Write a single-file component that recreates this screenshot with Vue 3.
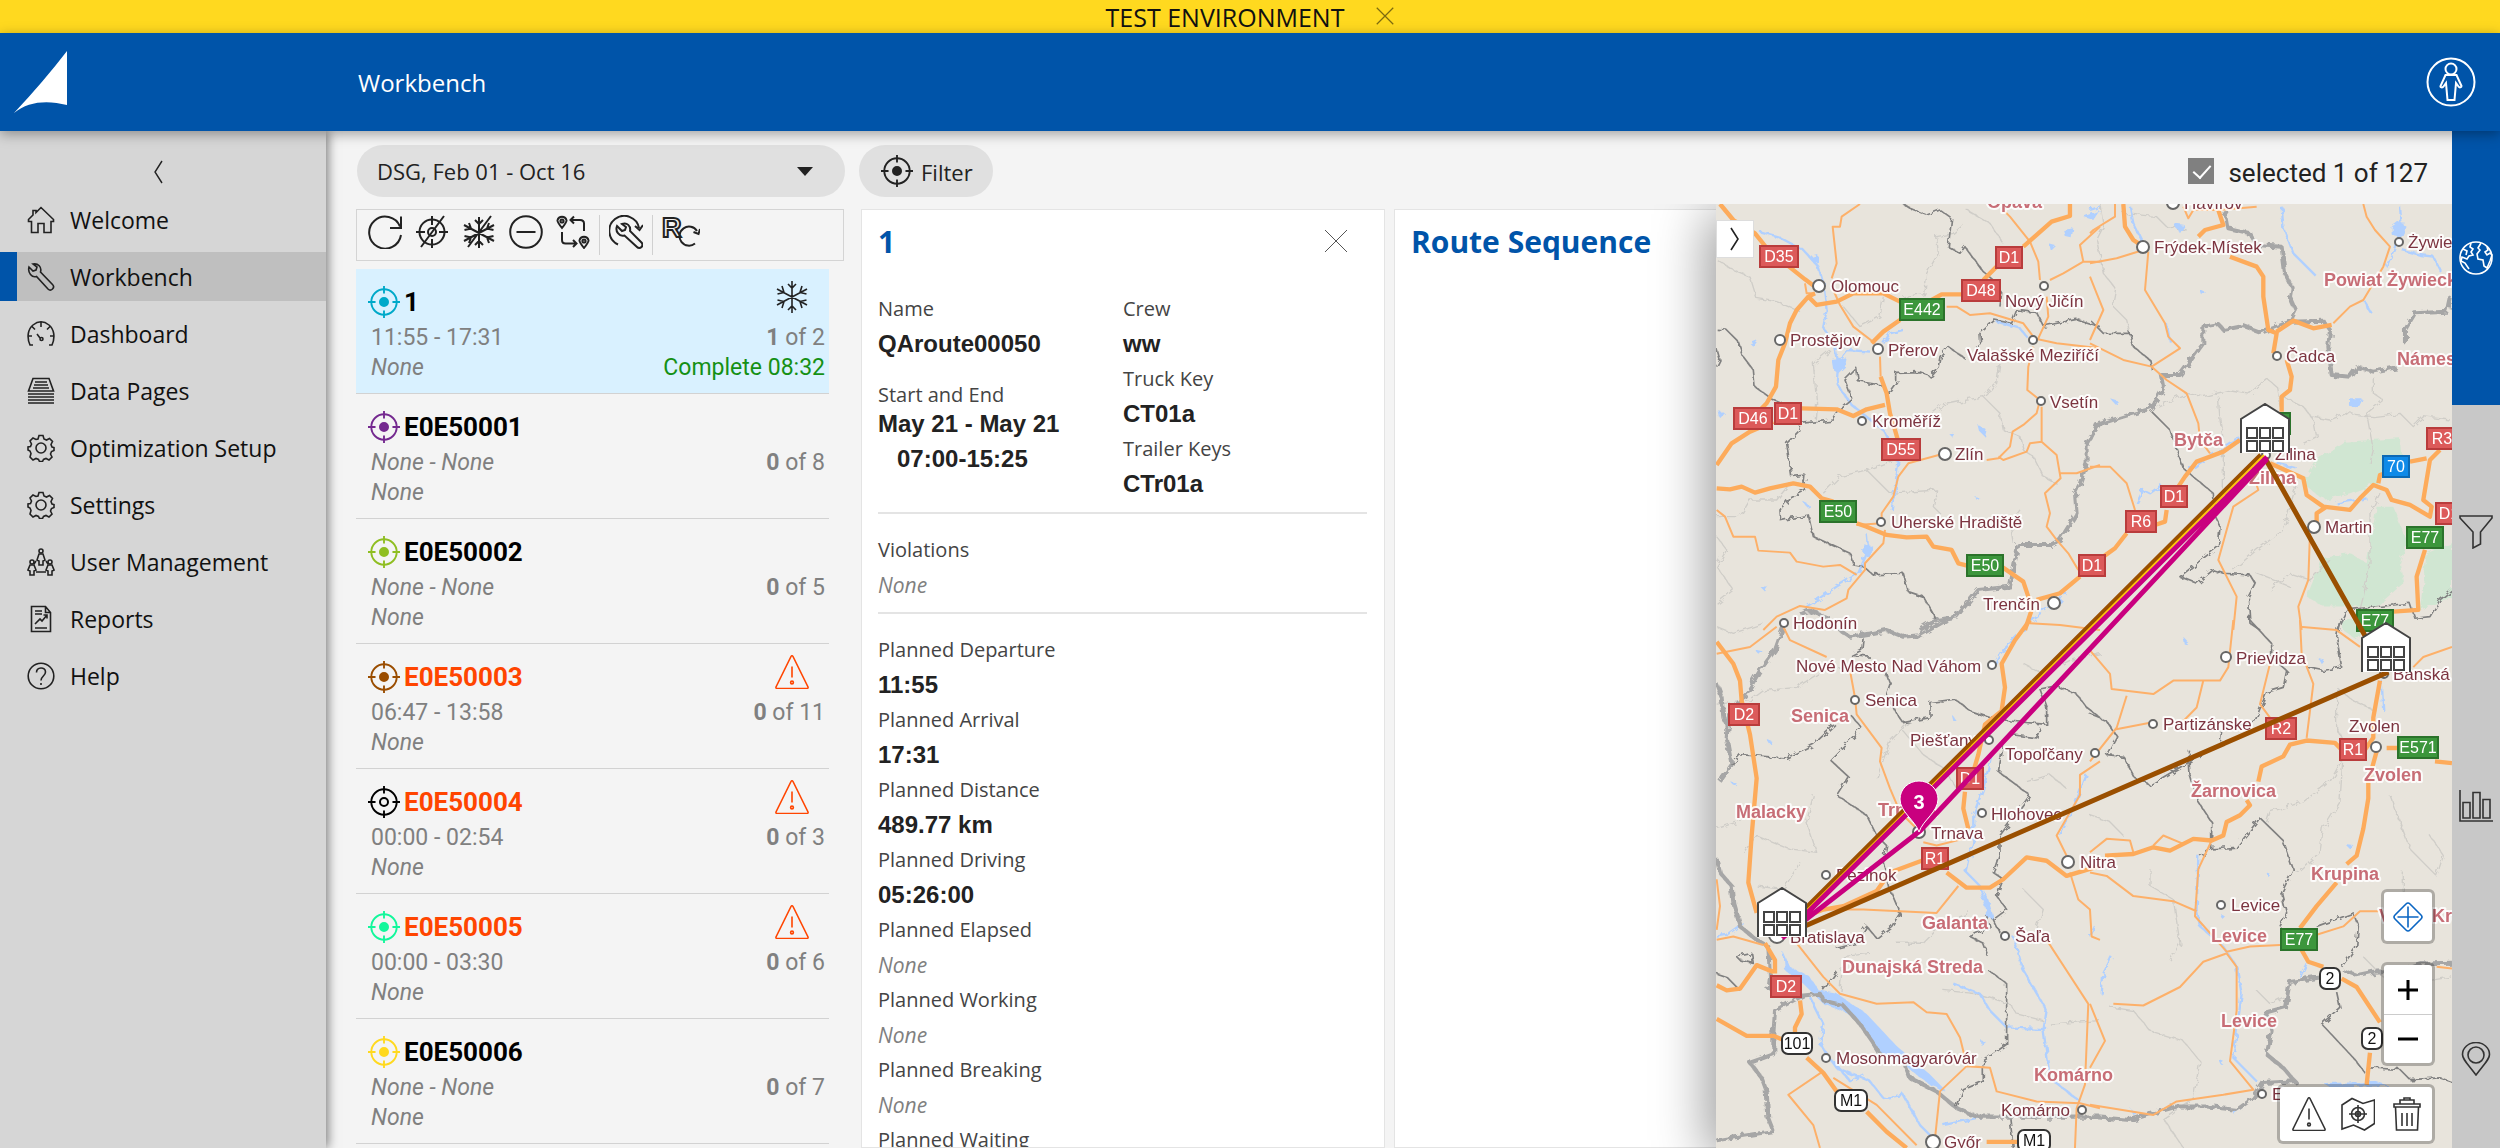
<script setup>
import { ref } from 'vue'

const period = ref('DSG, Feb 01 - Oct 16')
const allSelected = ref(true)

const menu = [
  { label: 'Welcome', icon: 'home' },
  { label: 'Workbench', icon: 'wrench', active: true },
  { label: 'Dashboard', icon: 'gauge' },
  { label: 'Data Pages', icon: 'stack' },
  { label: 'Optimization Setup', icon: 'gear' },
  { label: 'Settings', icon: 'gear' },
  { label: 'User Management', icon: 'users' },
  { label: 'Reports', icon: 'report' },
  { label: 'Help', icon: 'help' },
]

const tools = [
  { icon: 'refresh', label: 'Refresh' },
  { icon: 'target-off', label: 'Clear selection' },
  { icon: 'snow-off', label: 'Unfreeze' },
  { icon: 'minus', label: 'Remove' },
  { icon: 'swap', label: 'Swap stops' },
  { icon: 'wrench-cycle', label: 'Repair', sep: true },
  { icon: 'r-cycle', label: 'Recalculate', sep: true },
]

const routes = [
  { name: '1', color: '#00a9c9', time: '11:55 - 17:31', done: 1, total: 2, status: 'Complete 08:32', flag: 'snow', selected: true },
  { name: 'E0E50001', color: '#74298f', done: 0, total: 8 },
  { name: 'E0E50002', color: '#8fbe22', done: 0, total: 5 },
  { name: 'E0E50003', color: '#9a4d00', time: '06:47 - 13:58', done: 0, total: 11, flag: 'warning' },
  { name: 'E0E50004', color: '#000000', time: '00:00 - 02:54', done: 0, total: 3, flag: 'warning', hollow: true },
  { name: 'E0E50005', color: '#12f79b', time: '00:00 - 03:30', done: 0, total: 6, flag: 'warning' },
  { name: 'E0E50006', color: '#ffd91f', done: 0, total: 7 },
]

const planned = [
  ['Planned Departure', '11:55'],
  ['Planned Arrival', '17:31'],
  ['Planned Distance', '489.77 km'],
  ['Planned Driving', '05:26:00'],
  ['Planned Elapsed', null],
  ['Planned Working', null],
  ['Planned Breaking', null],
  ['Planned Waiting', null],
]

const rail = [
  { icon: 'globe', label: 'Map', active: true },
  { icon: 'funnel', label: 'Filters' },
  { icon: 'chart', label: 'Charts' },
  { icon: 'pin', label: 'Stops' },
]

/* Map geometry: four tiles, each with its own origin and scale */
const tiles = [
  {
    id: 'nw',
    transform: 'translate(1690 130) scale(0.3333)',
    green: '',
    light: 'M80 390L130 420L180 440L200 505L260 515L330 545M820 285L790 310L740 320L745 370L710 430L705 490L640 500M375 880L380 820L370 700L420 660M930 700L920 760L880 800L760 825L720 855L640 870M400 1090L450 1040L530 1020L640 980M530 1020L600 1090L740 1080L730 1130L750 1150M80 1160L150 1160L180 1110L260 1110L300 1060M880 800L930 850L940 900L990 920L1000 960L1030 980L1060 1040L1100 1060M80 1220L110 1260L80 1310L130 1380L80 1420M970 1240L960 1180L990 1140M830 240L900 280L940 340M460 530L510 590L570 560L580 500',
    river: 'M210 305L265 320L340 360L385 410L400 460L410 540L400 590L435 650L445 700L440 760L485 825L580 900L610 960L625 1000L605 1140M445 690L470 660L540 665M580 640L600 610L640 600M530 1210L535 1260L505 1330L440 1370L350 1430M920 575L990 595L1010 620M1130 1380L1110 1410L1020 1470',
    lake: 'M425 690L470 685L465 710L445 730L430 720ZM520 1240L550 1250L535 1280L520 1270ZM1120 300L1150 295L1145 325L1125 320ZM1075 340L1095 345L1080 360ZM865 885L890 900L885 920L870 905ZM85 840L105 850L90 865ZM340 1115L360 1125L350 1130ZM365 380L385 375L385 395L370 400ZM180 640L205 630L190 650ZM210 1370L235 1370L225 1385ZM1180 260L1230 240L1210 270ZM775 910L790 908L784 918ZM856 1102L870 1104L862 1112Z',
    country: 'M1230 880L1190 940L1190 1000L1170 1060L1155 1090L1160 1150L1110 1230L1080 1245L985 1245L960 1370L865 1380L800 1460L740 1470L690 1500M330 1450L350 1440L420 1465',
    border: 'M640 222L660 235L710 255L750 240L785 265L775 350L810 370L825 350L880 425L910 450L935 490L930 530M80 598L110 600L145 635L160 680L190 720L195 770L250 810L300 830M980 540L1040 548L1060 588L1160 568L1230 590M980 540L965 580L915 570L870 610L872 640L855 650M825 685L775 650L750 680L745 710L720 738L690 728L620 730L620 755L595 790L575 765L505 755L500 715L465 750L485 805L455 830L430 870L330 880L325 905L290 940L305 1040L345 1035L340 1080L300 1100L270 1140L272 1172L355 1155L370 1220L480 1270L490 1305L520 1310L550 1335L640 1330L655 1385L700 1400L740 1470M80 655L90 690L80 710',
    minor: 'M510 222L455 260L450 290L428 290L440 400L425 445M430 480L450 525L490 590L555 640M940 240L960 260L1020 335L1045 395L1050 450M1070 500L1075 560L1045 625M770 530L800 530L840 555L900 550L1000 580L1030 620M1030 625L1100 640L1230 655M1030 650L1015 710L1012 780L1050 810L1040 850L1000 885L968 905L960 950L925 985L890 990M1055 830L1055 935L1020 940L1010 965L940 990L925 980M1055 935L1100 975L1112 1045L1065 1090L1080 1150L1070 1190L1100 1230L1135 1270L1165 1320M1112 1030L1160 1030L1230 1005M765 970L655 1000L625 1040L610 1100L575 1150L575 1180M500 1185L575 1180M585 1200L580 1240L525 1300L525 1320L475 1380L470 1405L405 1440L330 1428L260 1460L220 1500M80 1140L105 1160L130 1220L195 1220L205 1262L300 1268L320 1295L400 1310L450 1305L500 1335M1080 450L1120 430L1180 395L1230 395M1230 290L1170 345L1180 395M1020 1480L1110 1485L1230 1500M345 460L350 490L375 490M570 680L572 740',
    major: 'M90 222L130 270L195 310L235 360L300 412L345 448L375 470M375 490L355 500L320 540L300 580L285 640L265 690L258 770L230 820L210 840M250 875L180 905L125 940L80 1005M355 500L380 525L440 515L490 490L580 490L630 515M725 510L755 493L815 493M630 570L580 605L545 640M335 835L440 838L490 858L530 838L585 825M572 740L590 790L600 850L615 900L625 935M880 450L920 410M1000 350L1040 315L1085 275L1140 258L1140 222M80 1075L120 1078L155 1070L195 1088L240 1075L310 1060L360 1070L395 1105L430 1115M500 1180L530 1190L590 1215L650 1222L710 1220L730 1250L785 1260L805 1300L835 1308M935 1310L1000 1355L1015 1400L1025 1440L1005 1500M1040 1410L1110 1390L1170 1340',
  },
  {
    id: 'ne',
    transform: 'translate(2090 130) scale(0.3333)',
    green: 'M640 1060L680 990L760 935L930 925L935 1000L860 1060L780 1090L700 1110ZM860 1130L910 1130L950 1230L930 1300L940 1360L860 1430L700 1430L650 1400L700 1280L780 1270L830 1300ZM1010 1270L1086 1240L1086 1400L990 1440Z',
    light: 'M30 222L40 290L20 330L40 430L80 480L70 530L110 570L120 610M100 250L200 260L230 290L290 300M200 830L290 790L340 800L420 780L480 790L530 745L560 770L570 830M385 800L390 870L400 930L400 1090M580 800L640 830L670 870L680 920L640 940M660 860L720 870L770 850L850 860L930 850L970 890L1000 860L1080 870M850 740L850 790L880 810L830 850L850 960L840 1000M620 1060L600 1130L580 1200L500 1260L430 1320M870 1090L840 1150L840 1300L820 1400L810 1440M540 1380L600 1330L660 1350L720 1290M500 1330L600 1370',
    river: 'M575 230L580 290L610 370L680 440M930 230L935 290L915 350L890 410M935 360L990 375L1030 380L1055 430M450 925L350 985L300 1020M215 1065L180 1090L160 1080L140 1120M740 1120L830 1105M560 1000L620 1015M820 510L845 550M230 580L240 635M120 230L130 280L160 340M0 240L30 230',
    lake: 'M905 290L925 275L950 290L935 320L905 315ZM250 280L285 285L270 310ZM780 805L815 805L800 835L780 830ZM330 480L348 488L338 500ZM60 805L85 812L75 822Z',
    country: 'M405 240L415 295L480 310L500 345L575 350L585 430L605 470L600 500L618 540L600 575L515 608L460 588L400 600L385 582L340 590L340 640L270 735L215 735L222 770L185 835L100 860L20 885L0 930M600 575L700 572L720 600L715 650L725 735L780 740L800 712L850 725L920 712M945 640L945 600L975 550L1070 545L1080 500',
    border: 'M0 570L40 610L120 610L130 650L180 690L185 720M185 845L240 900L280 1015L370 1090L375 1160L390 1190L385 1250L320 1300L270 1340L320 1360L370 1320L400 1330L480 1335L495 1360L475 1400L480 1480L510 1500M740 1500L770 1440L960 1420L975 1465L1020 1460L1050 1410L1086 1380',
    minor: 'M75 222L75 260L10 300L0 310M160 360L80 385L0 400M175 365L165 480L225 580L235 620L270 655L185 710M0 440L20 490L40 540L0 630M185 710L230 750L290 790L325 880L330 930L360 970M0 640L100 690L185 710M820 222L830 260L855 300L900 350L880 410L820 510L780 530L730 580M0 1010L60 1010L110 1060L135 1140M500 1065L505 1080L430 1130L410 1200L385 1290L440 1400L430 1500M660 1210L655 1350L625 1430L635 1500M280 230L295 265L310 240L390 240L500 230',
    major: 'M100 222L105 290L130 330L160 350M325 320L345 300L400 285L385 240M420 380L500 410L520 440L520 500L535 600L560 610L550 670M560 605L610 572L670 595L725 585M590 690L605 740L600 780L575 800L575 845M450 930L400 965L320 995L285 1040L265 1070M230 1140L225 1175L195 1185M110 1210L75 1255L40 1280M540 1000L640 1045L650 1095L700 1130L780 1140L810 1105L850 1065L890 1080L905 1110L960 1125L1020 1160L1025 1130L1000 1110L1020 990L1050 960M865 1060L870 1035L885 1030M960 995L1010 985M1005 1260L980 1340L985 1440L910 1445M680 1180L680 1150L710 1130',
  },
  {
    id: 'sw',
    transform: 'translate(1690 620) scale(0.3333 0.3367)',
    green: '',
    light: 'M80 250L180 240L220 210L320 200L400 150L480 140M560 470L600 360L660 300M640 330L700 400L760 440L800 500M80 620L140 600L200 560M160 690L200 640L300 680L380 690L350 600L370 520M200 790L280 800L330 720M760 1100L860 1110L960 1140L980 1170L1060 1190M1080 1200L1230 1190M450 1100L460 1000L540 990M620 960L700 960L760 900L840 870M1000 800L1060 860L1040 920M1000 130L1060 160L1140 120L1230 100M1010 480L1080 460L1130 500M80 20L130 40L220 10',
    river: 'M1010 20L970 60L930 100L915 130M905 400L880 500L850 580L850 660L830 750L870 790L890 860L910 890M790 1080L870 1110L900 1160L950 1210L1060 1215L1080 1360L1170 1430M970 940L1000 1040L1070 1160L1060 1220M1190 460L1150 560L1110 640M80 940L110 935L160 900M760 1500L880 1475M360 1120L400 1200L390 1260L440 1330L540 1370L580 1420L640 1410L690 1500L720 1530M430 1310L480 1370L520 1350',
    lake: 'M280 985L300 1030L360 1060L385 1100L440 1110L530 1170L620 1265L720 1350L770 1400L720 1380L640 1320L560 1280L500 1180L400 1140L340 1080L285 1040ZM880 800L895 830L910 880L890 890ZM190 85L215 90L205 100ZM785 280L800 300L790 300ZM120 480L138 482L130 490ZM230 355L248 362L240 370ZM870 1245L885 1250L872 1262Z',
    country: 'M280 20L255 90L210 150L175 210L155 240L115 290L110 350L125 430L90 480M80 190L95 230L100 290L115 320M80 710L90 750L125 790L130 840L150 910L200 950L235 970L240 1060L235 1100M250 1230L255 1160L310 1130L340 1115L390 1110L400 1130L460 1145L510 1200L545 1250L570 1290M250 1230L250 1290L180 1315L215 1360L230 1400L235 1480L250 1518L80 1545M640 1310L660 1360L740 1400L800 1450L860 1475L1000 1475L1230 1475M450 30L480 50L540 40L590 30L640 50L690 45L770 0',
    border: 'M520 50L515 90L485 105L540 110M585 150L600 190L590 220L620 280L640 305L720 290L720 245L795 235L840 270L900 290L960 300L1070 310L1070 260L1050 205L1100 195L1160 220L1190 260L1230 290M480 280L515 320L420 415L475 465L440 520L530 580L560 640L590 670L580 720L600 800L630 870L605 910L560 945L530 910L500 960L440 975M125 430L150 400L220 405L290 410L370 370L435 310M945 350L925 450L1020 520L930 640L930 690L910 750L940 770L920 820L950 860L910 890L930 930M890 880L900 910L840 940L880 960L895 1000M895 1040L950 1080L950 1260L880 1310L880 1370L820 1395L800 1450M80 1050L110 1060L150 1100M140 1000L185 990L190 1020L150 1010ZM400 1100L440 1045M960 1480L970 1568M960 340L1040 350L1050 320',
    minor: 'M80 100L180 80L260 20M280 20L300 60L410 110M480 150L495 230L500 280L575 380L570 420L600 500L630 570L680 620M320 960L400 1060L450 1110L560 1140L670 1135L710 1165L770 1170L810 1240L825 1300M400 1340L295 1410L370 1500L390 1568M830 1325L750 1400L735 1540M830 1325L900 1330L920 1400L1040 1430L1170 1435L1230 1450M1070 950L1195 1140L1185 1380L1160 1450L1155 1568M1140 750L1165 830L1200 860L1205 940L1230 950M410 860L520 860L740 870L805 790M1230 420L1170 460L1170 520L1100 640L1130 700M700 660L740 670L820 650M80 950L130 940L220 965M430 1360L560 1440L680 1560M80 770L90 850L80 920',
    major: 'M80 65L130 130L150 180L155 240L180 340L200 470L185 640L175 780L200 870M225 960L255 1010L255 1050M330 1130L335 1170L315 1210L315 1225M80 1185L170 1235L250 1235L275 1245M350 1300L400 1345L440 1400M530 1460L590 1520L650 1568M80 1085L110 1100L150 1095L200 1025L250 1045M350 880L400 860L460 850L560 805L600 750L695 715M770 750L830 795L900 795L940 770L1010 705L1070 715L1130 760L1180 745L1230 730M1020 0L975 60L935 130L945 200L935 270L885 310L865 400L850 450M825 510L820 560L835 620M890 1550L985 1550',
  },
  {
    id: 'se',
    transform: 'translate(2090 620) scale(0.3333 0.3367)',
    green: 'M750 0L850 0L800 60L760 30Z',
    light: 'M740 200L790 240L860 270M740 200L740 320L770 390L720 480L640 540L540 570L530 600M760 390L750 540L700 620L690 690L620 750M180 740L180 790L250 830L270 960L240 1010M900 520L930 600L960 680L1040 760L1060 700L1020 640M940 750L940 830L900 850M60 1150L130 1160L180 1220L280 1250L330 1310L310 1420L220 1480L280 1568M0 580L60 600L100 640M820 1000L880 1060L960 1080L1086 1060M500 1100L540 1140L580 1120',
    river: 'M325 700L320 860L330 910L400 970L440 1030L455 1110L430 1300L500 1370M65 1000L40 1050L35 1110M875 180L880 270M490 1420L430 1465M730 1385L860 1380M630 1060L650 1020M0 940L15 910',
    lake: 'M280 50L295 65L285 75ZM765 665L790 668L780 680ZM685 115L705 120L695 132ZM390 870L402 878L394 885ZM385 1305L402 1312L392 1320ZM120 1450L140 1465L130 1470ZM530 752L542 756L534 764ZM700 1375L860 1372L900 1384L720 1388Z',
    country: 'M1086 1018L1000 1020L940 1040L850 1045L800 1055L760 1040M690 1062L600 1075L585 1150L530 1165L545 1220L530 1290L580 1330L615 1370L520 1375L490 1420L440 1455L350 1445L260 1445L120 1485L0 1475',
    border: 'M480 0L545 70L545 110L590 150L580 200L530 215L495 300L440 310M650 140L700 150L755 140L740 50L750 0M0 280L50 300L80 345L50 400L100 405L135 470L180 490L300 420L390 370L395 330M295 385L300 460L325 540L365 600L365 680L330 700M365 680L440 675L510 588L580 655L610 740L575 810L590 870L570 910M680 910L790 870L805 910L800 970L755 1030M740 1105L750 1150L695 1200L790 1300L825 1345M840 1330L930 1335L960 1365L1050 1360L1086 1372',
    minor: 'M0 90L60 160L65 205L190 220L250 180L390 180L415 140L430 0M110 225L80 320L0 420M75 325L180 305M340 180L320 260L280 300M540 130L510 250L540 290M630 0L635 100L670 190L650 350M630 20L740 30L810 80M970 140L1000 110L1086 80M365 655L325 740L315 880L410 985L480 970L570 965M0 690L50 650L120 655L130 690M190 670L220 640L280 665M0 750L50 760L130 820L250 835L320 865M410 990L340 1015L270 1090L230 1110L160 1145L70 1140M410 990L440 1030L440 1160L420 1310L490 1395L400 1410L260 1430L190 1470L0 1440M0 1140L45 1250L0 1330M680 935L760 910L810 865L880 865M1040 1030L1086 1035',
    major: 'M45 700L130 695L190 675L240 685L310 650L365 655L400 640L410 600L450 580L480 550L470 535M505 480L515 435L580 405L600 370L650 358L735 365L755 385M825 385L850 350L850 290L870 180M890 380L930 380M860 390L835 480L835 530L820 620L800 700L770 725M740 780L680 850L630 915M635 980L655 1015L700 1030M755 1065L800 1090L870 1195M840 1285L830 1380M1035 420L1086 425',
  },
]

const towns = [
  ['Frýdek-Místek', 2154, 247, 2143, 247, 6],
  ['Olomouc', 1831, 286, 1819, 286, 6],
  ['Prostějov', 1790, 340, 1780, 340, 5],
  ['Přerov', 1888, 350, 1878, 349, 5],
  ['Nový Jičín', 2005, 301, 2044, 286, 4],
  ['Valašské Meziříčí', 1967, 355, 2033, 340, 4],
  ['Vsetín', 2050, 402, 2041, 401, 4],
  ['Kroměříž', 1872, 421, 1862, 421, 4],
  ['Zlín', 1955, 454, 1945, 454, 6],
  ['Uherské Hradiště', 1891, 522, 1881, 522, 4],
  ['Hodonín', 1793, 623, 1784, 623, 4],
  ['Trenčín', 1983, 604, 2054, 603, 6],
  ['Żywiec', 2408, 242, 2399, 242, 4],
  ['Havířov', 2184, 203, 2173, 203, 6],
  ['Čadca', 2286, 356, 2277, 356, 4],
  ['Žilina', 2275, 454, 2266, 455, 4],
  ['Martin', 2325, 527, 2314, 527, 6],
  ['Prievidza', 2236, 658, 2226, 657, 5],
  ['Partizánske', 2163, 724, 2153, 724, 4],
  ['Topoľčany', 2005, 754, 2095, 753, 4],
  ['Nové Mesto Nad Váhom', 1796, 666, 1992, 665, 4],
  ['Senica', 1865, 700, 1855, 700, 4],
  ['Piešťany', 1910, 740, 1989, 740, 4],
  ['Hlohovec', 1991, 814, 1982, 813, 4],
  ['Trnava', 1931, 833, 1919, 832, 6],
  ['Pezinok', 1836, 875, 1826, 875, 4],
  ['Nitra', 2080, 862, 2068, 862, 6],
  ['Bratislava', 1790, 937, 1777, 935, 8],
  ['Šaľa', 2015, 936, 2005, 936, 4],
  ['Mosonmagyaróvár', 1836, 1058, 1826, 1058, 4],
  ['Komárno', 2001, 1110, 2082, 1110, 4],
  ['Győr', 1944, 1142, 1933, 1142, 7],
  ['Zvolen', 2349, 726, 2376, 747, 5],
  ['Banská', 2393, 674, 2384, 674, 4],
  ['Levice', 2231, 905, 2221, 905, 4],
  ['Esztergom', 2272, 1094, 2262, 1094, 4],
]

const districts = [
  ['Opava', 1987, 201],
  ['Powiat Żywiecki', 2324, 279],
  ['Námestovo', 2397, 358],
  ['Bytča', 2174, 439],
  ['Žilina', 2249, 477],
  ['Senica', 1791, 715],
  ['Malacky', 1736, 811],
  ['Trnava', 1878, 809],
  ['Galanta', 1922, 922],
  ['Dunajská Streda', 1842, 966],
  ['Komárno', 2034, 1074],
  ['Žarnovica', 2191, 790],
  ['Zvolen', 2364, 774],
  ['Krupina', 2311, 873],
  ['Levice', 2211, 935],
  ['Levice', 2221, 1020],
  ['Veľký Krtíš', 2379, 915],
]

const shields = [
  ['D35', 1779, 257, 38, 'red'],
  ['D1', 2009, 258, 26, 'red'],
  ['D48', 1981, 291, 38, 'red'],
  ['E442', 1922, 310, 44, 'green'],
  ['D46', 1753, 419, 38, 'red'],
  ['D1', 1788, 414, 26, 'red'],
  ['D55', 1901, 450, 38, 'red'],
  ['E50', 1838, 512, 36, 'green'],
  ['E50', 1985, 566, 36, 'green'],
  ['D1', 2092, 566, 26, 'red'],
  ['D1', 2174, 497, 26, 'red'],
  ['R6', 2141, 522, 30, 'red'],
  ['R3', 2442, 439, 30, 'red'],
  ['70', 2396, 467, 26, 'blue'],
  ['D1', 2449, 514, 26, 'red'],
  ['E77', 2425, 538, 36, 'green'],
  ['E77', 2375, 621, 36, 'green'],
  ['E50', 2272, 424, 36, 'green'],
  ['D2', 1744, 715, 30, 'red'],
  ['D1', 1970, 779, 26, 'red'],
  ['R1', 1935, 859, 26, 'red'],
  ['R2', 2281, 729, 30, 'red'],
  ['R1', 2353, 750, 26, 'red'],
  ['E571', 2418, 748, 40, 'green'],
  ['E77', 2299, 940, 36, 'green'],
  ['D2', 1786, 987, 30, 'red'],
  ['101', 1797, 1044, 30, 'white'],
  ['M1', 1851, 1101, 32, 'white'],
  ['M1', 2034, 1141, 32, 'white'],
  ['2', 2330, 979, 20, 'white'],
  ['2', 2372, 1039, 20, 'white'],
]

const depots = [
  [2240, 403],
  [2361, 622],
  [1757, 887],
]
</script>

<template>
  <div class="app">
    <svg class="sprite" aria-hidden="true">
      <symbol id="home" viewBox="0 0 28 28"><path d="M1.5 13.5L6 9V4.500h3v2L14 1.500l12.500 12v2h-2.500v11h-7v-9h-6v9H4.500v-11h-3z" /></symbol>
      <symbol id="wrench" viewBox="0 0 28 28"><path d="M2 4l4 4 3-1 1-3-4-3c5-1 9 3 7.500 8L25.500 21.500a3 3 0 0 1-4.500 4.500L9.500 13.500C5 15 .5 10 2 4z" /></symbol>
      <symbol id="gauge" viewBox="0 0 28 28"><path d="M6 25H3C-.5 17 1 9 6 5c5-4 11-4 16 0s6.500 12 3 20h-3M14 2v5M5 6.500l3 3M23 6.500l-3 3M1 16h4M27 16h-4M10 14l3 4" /><circle cx="14.500" cy="19" r="1.500" /></symbol>
      <symbol id="stack" viewBox="0 0 28 28"><path d="M6 1.500h16l4.500 12.500h-25zM8 5h12M7 8h14M6 11h16M1 17h26M1 20h26M1 23h26M1 26h26" /></symbol>
      <symbol id="gear" viewBox="0 0 28 28"><path d="M12 1.500h4l1 3.500 2.500 1 3-1.500 3 3L24 10.500l1 2.500 2 .5v3l-2.500 1-1 2.500 1.500 3-3 3-3-1.500-2.500 1-1 2h-3l-1-2-2.500-1-3 1.500-3-3L4 19.500 3 17l-2-1v-3l2.500-.5 1-2.500L3 7l3-3 3 1.500L11 5z" /><circle cx="14" cy="14" r="5" /></symbol>
      <symbol id="users" viewBox="0 0 28 28"><circle cx="14" cy="3" r="2" /><circle cx="5" cy="14" r="2" /><circle cx="23" cy="14" r="2" /><path d="M12 6h4l2 6-2 1v4h-4v-4l-2-1zM3 17h4l2 5-2 1v4H3v-4l-2-1zM21 17h4l2 5-2 1v4h-4v-4l-2-1zM9 13l-2 3M19 13l2 3M9 24h10" /></symbol>
      <symbol id="report" viewBox="0 0 28 28"><path d="M4.500 1.500h14l5 6v19h-19zM18.500 1.500v6h5M8 6h7M8 9h7M8 23h12M8 19l5-5 2 2 5-6M16.500 10H20v3.500" /></symbol>
      <symbol id="help" viewBox="0 0 28 28"><circle cx="14" cy="14" r="12.800" /><path d="M9.500 10.500c0-6 9-6 9-.5 0 4-4.500 4-4.500 8.500M14 21v2" /></symbol>
      <symbol id="target" viewBox="0 0 34 34"><circle cx="17" cy="17" r="13.500" /><path d="M17 0v8M17 26v8M0 17h8M26 17h8" /></symbol>
      <symbol id="target-off" viewBox="0 0 34 34"><circle cx="17" cy="17" r="12.500" /><circle cx="17" cy="17" r="4" /><path d="M17 1v9M17 24v9M1 17h9M24 17h9M29 1L6 32" /></symbol>
      <symbol id="snow" viewBox="0 0 34 34"><path d="M17 1v32M2 9l30 16M32 9L2 25M13 4l4 4 4-4M13 30l4-4 4 4M2.500 14l6.500-1.500L7 6M31.500 14L25 12.500 27 6M2.500 20L9 21.500 7 28M31.500 20L25 21.500l2 6.500" /></symbol>
      <symbol id="snow-off" viewBox="0 0 34 34"><path d="M17 2v31M2 10l30 16M32 10L2 26M13 5l4 4 4-4M13 30l4-4 4 4M2.500 15l6.500-1.500L7 8M31.500 15L25 13.500 27 8M2.500 21L9 22.500 7 28M31.500 21L25 22.500l2 5.500M29 1L6 32" /></symbol>
      <symbol id="refresh" viewBox="0 0 34 34"><path d="M33 20A16 16 0 1 1 32 11.500M33 1.500V13H22" /></symbol>
      <symbol id="minus" viewBox="0 0 34 34"><circle cx="17" cy="17" r="15.800" /><path d="M7.500 17h19" /></symbol>
      <symbol id="swap" viewBox="0 0 34 34"><path d="M6 13C2 8 1 6.500 1.500 5a4.700 4.700 0 0 1 9 0C11 6.500 10 8 6 13zM28 33c-4-5-5-6.500-4.500-8a4.700 4.700 0 0 1 9 0c.5 1.500-.5 3-4.500 8zM15 5h9c3 0 4 1 4 3.500V16M18 1.500L14.500 5 18 8.500M6 17v8c0 2.500 1 3.500 3.500 3.500H20M17 25l3.500 3.500L17 32" /><circle cx="6" cy="6" r="1.600" /><circle cx="28" cy="26" r="1.600" /></symbol>
      <symbol id="wrench-cycle" viewBox="0 0 34 34"><path d="M9 29.500A15 15 0 1 1 30 13M26 11l4.500 4L34 10M8 11l5 5 3-1 1-3-4-3c5-2 9 2 8 7l11.500 11.500a3 3 0 0 1-4.500 4.500L15.500 20.500C10 22 6 16 8 11z" /></symbol>
      <symbol id="r-cycle" viewBox="0 0 38 34"><text x="0" y="22" class="letter">R</text><path d="M33 28.500a9.500 9.500 0 1 1 2-12.500M31.500 17l5 2 1.500-5" /></symbol>
      <symbol id="warning" viewBox="0 0 34 34"><path d="M16 1.500c.5-1 1.500-1 2 0l15 30.500c.3 1-.2 1.500-1 1.500H2c-.800 0-1.300-.5-1-1.500zM17 11.500v11" /><circle cx="17" cy="27.500" r="1.400" /></symbol>
      <symbol id="close" viewBox="0 0 24 24"><path d="M1 1l22 22M23 1L1 23" /></symbol>
      <symbol id="person" viewBox="0 0 50 50"><circle cx="25" cy="25" r="23.500" /><circle cx="25" cy="12" r="5.500" /><path d="M19.500 18h11l5 11c0 1.500-2 2-3 .5l-2.500-3.500-1.500 17h-7L20 26l-2.500 3.500c-1 1.500-3.500 1-3-.5z" /></symbol>
      <symbol id="globe" viewBox="0 0 34 34"><circle cx="17" cy="17" r="16" /><path d="M12 2l-1 4 3 2-2 3 2 3-4 1-2 3-5-2-1 4 4 2 4 6M4 8l4 2-1 4M22 2l-3 5 2 2-3 4 1 5 5 1 1 6 3 2 3-7 2-6-2-2-3 2-2-3 3-2-1-3" /></symbol>
      <symbol id="funnel" viewBox="0 0 34 34"><path d="M1 1h32v2L21.500 17v12L14 33V17L1 3z" /></symbol>
      <symbol id="chart" viewBox="0 0 34 34"><path d="M1 1v31h33M4 29V13.500h7V29zM14 29V3.500h7V29zM24 29V10.500h7V29z" /></symbol>
      <symbol id="pin" viewBox="0 0 34 34"><path d="M17 33C7 20 3.500 17 3.500 12.500a13.500 12 0 0 1 27 0C30.500 17 27 20 17 33z" /><circle cx="17" cy="13" r="8" /></symbol>
      <symbol id="diamond" viewBox="0 0 32 32"><path d="M14 3q2-2 4 0l11 11q2 2 0 4L18 29q-2 2-4 0L3 18q-2-2 0-4zM16 5.500v21M5.500 16h21" /></symbol>
      <symbol id="mapfold" viewBox="0 0 34 34"><path d="M1 8l10-6.500 11 5L33.500 3v23.500l-10 6.500-11-5L1 32z" /><circle cx="17" cy="17" r="6.500" /><circle cx="17" cy="17" r="2.500" /><path d="M17 8v18M8 17h18" /></symbol>
      <symbol id="trash" viewBox="0 0 34 34"><path d="M4 10v-3h26v3zM10 7V3h14v4M5.500 10l1 23h21l1-23M12 16v13M17 16v13M22 16v13" /><path d="M14 3V1h6v2" /></symbol>
      <symbol id="depot" viewBox="0 0 50 52"><path fill="#fff" stroke="none" d="M1 50V16L25 1l24 15v34z" /><path d="M1 50V16L25 1l24 15v34M7 25h10v10H7zM20 25h10v10H20zM33 25h10v10H33zM7 38h10v10H7zM20 38h10v10H20zM33 38h10v10H33z" /></symbol>
    </svg>

    <div class="banner">
      <span>TEST ENVIRONMENT</span>
      <button class="bare" aria-label="Dismiss"><svg class="x-small"><use href="#close" /></svg></button>
    </div>

    <header class="header">
      <div class="brand">
        <svg class="logo" viewBox="0 0 54 62"><path fill="#fff" d="M53 0v54C34 49 14 50 0 62Q30 30 53 0z" /></svg>
      </div>
      <h1>Workbench</h1>
      <button class="bare account" aria-label="Account"><svg class="i50"><use href="#person" /></svg></button>
    </header>

    <div class="body">
      <nav class="sidebar">
        <button class="bare collapse" aria-label="Collapse menu">
          <svg width="10" height="24" viewBox="0 0 10 24"><path d="M9 1L2 12l7 11" /></svg>
        </button>
        <a v-for="m in menu" :key="m.label" href="#" :class="['menu-item', { active: m.active }]">
          <svg class="i28"><use :href="'#' + m.icon" /></svg>
          <span>{{ m.label }}</span>
        </a>
      </nav>

      <main class="main">
        <div class="topbar">
          <div class="picker">
            <select v-model="period" aria-label="Planning period">
              <option>DSG, Feb 01 - Oct 16</option>
            </select>
            <svg class="caret" viewBox="0 0 16 9"><path d="M0 0h16L8 9z" /></svg>
          </div>
          <button class="filter">
            <svg class="i32"><use href="#target" /><circle cx="16" cy="16" r="4" class="dot" /></svg>
            <span>Filter</span>
          </button>
          <label class="selected-count">
            <input v-model="allSelected" type="checkbox" />
            <span>selected 1 of 127</span>
          </label>
        </div>

        <div class="workspace">
          <section class="routes">
            <div class="toolbar">
              <template v-for="t in tools" :key="t.icon">
                <i v-if="t.sep" class="sep"></i>
                <button class="bare" :aria-label="t.label">
                  <svg :class="['i34', { wide: t.icon === 'r-cycle' }]"><use :href="'#' + t.icon" /></svg>
                </button>
              </template>
            </div>
            <ul class="list">
              <li v-for="r in routes" :key="r.name" :class="['route', { chosen: r.selected }]">
                <div class="route-head">
                  <svg class="i32" :style="{ color: r.color }">
                    <use href="#target" /><circle cx="16" cy="16" r="4" :class="{ dot: !r.hollow }" />
                  </svg>
                  <strong :class="{ alert: r.flag === 'warning' }">{{ r.name }}</strong>
                  <svg v-if="r.flag" :class="['i34', 'flag', { alert: r.flag === 'warning' }]"><use :href="'#' + r.flag" /></svg>
                </div>
                <div class="route-line">
                  <span v-if="r.time">{{ r.time }}</span>
                  <em v-else>None - None</em>
                  <span><b>{{ r.done }}</b> of {{ r.total }}</span>
                </div>
                <div class="route-line">
                  <em>None</em>
                  <span v-if="r.status" class="status">{{ r.status }}</span>
                </div>
              </li>
            </ul>
          </section>

          <section class="panel detail">
            <div class="panel-head">
              <h2>1</h2>
              <button class="bare" aria-label="Close"><svg class="i24"><use href="#close" /></svg></button>
            </div>
            <div class="summary">
              <dl>
                <dt>Name</dt>
                <dd>QAroute00050</dd>
                <dt class="range">Start and End</dt>
                <dd class="dates">May 21 - May 21</dd>
                <dd class="hours">07:00-15:25</dd>
              </dl>
              <dl>
                <dt>Crew</dt>
                <dd>ww</dd>
                <dt>Truck Key</dt>
                <dd>CT01a</dd>
                <dt>Trailer Keys</dt>
                <dd>CTr01a</dd>
              </dl>
            </div>
            <dl class="block">
              <dt>Violations</dt>
              <dd><em>None</em></dd>
            </dl>
            <dl class="block">
              <template v-for="p in planned" :key="p[0]">
                <dt>{{ p[0] }}</dt>
                <dd><template v-if="p[1]">{{ p[1] }}</template><em v-else>None</em></dd>
              </template>
            </dl>
          </section>

          <section class="panel sequence">
            <div class="panel-head"><h2>Route Sequence</h2></div>
          </section>

          <section class="map">
            <svg class="canvas" viewBox="1716 204 736 944" preserveAspectRatio="xMidYMid slice">
              <filter id="rough" x="-5%" y="-5%" width="110%" height="110%">
                <feTurbulence type="fractalNoise" baseFrequency="0.15" numOctaves="2" seed="4" />
                <feDisplacementMap in="SourceGraphic" scale="7" />
              </filter>
              <rect x="1716" y="204" width="736" height="944" fill="#e8e4dc" />
              <g filter="url(#rough)">
                <g v-for="t in tiles" :key="t.id" :transform="t.transform">
                  <path class="green" :d="t.green" />
                  <path class="light" :d="t.light" />
                  <path class="river" :d="t.river" />
                  <path class="lake" :d="t.lake" />
                </g>
                <g v-for="t in tiles" :key="t.id" :transform="t.transform">
                  <path class="country" :d="t.country" />
                  <path class="border" :d="t.border" />
                </g>
              </g>
              <g v-for="t in tiles" :key="t.id" :transform="t.transform">
                <path class="minor" :d="t.minor" />
                <path class="major" :d="t.major" />
              </g>
              <g class="markers">
                <circle v-for="c in towns" :key="c[0] + c[3]" :cx="c[3]" :cy="c[4]" :r="c[5]" />
              </g>
              <text v-for="(d, i) in districts" :key="'d' + i" class="district" :x="d[1]" :y="d[2] + 7">{{ d[0] }}</text>
              <text v-for="c in towns" :key="'t' + c[0]" class="town" :x="c[1]" :y="c[2] + 6">{{ c[0] }}</text>
              <g v-for="(s, i) in shields" :key="'s' + i" :class="['shield', s[4]]">
                <rect :x="s[1] - s[3] / 2" :y="s[2] - 11" :width="s[3]" height="21" :rx="s[4] === 'white' ? 6 : 0" />
                <text :x="s[1]" :y="s[2] + 5">{{ s[0] }}</text>
              </g>
              <g class="trips">
                <path stroke="#9a4f00" stroke-width="5" d="M2261 455L1779 935M2265 458L2386 673L1782 936" />
                <path stroke="#ffc80a" stroke-width="2" d="M2264 455L1781 936" />
                <path stroke="#c9007f" stroke-width="5" d="M2267 457L1782 938M2267 459L1920 831L1782 938" />
              </g>
              <use v-for="d in depots" :key="d[0]" href="#depot" class="depot" :x="d[0]" :y="d[1]" width="50" height="52" />
              <path class="stop" d="M1919 832C1915 820 1900 812 1900 799a19 18 0 0 1 38 0C1938 812 1923 820 1919 832z" />
              <text class="stop-no" x="1919" y="809">3</text>
            </svg>

            <button class="expand" aria-label="Expand map">
              <svg width="10" height="24" viewBox="0 0 10 24"><path d="M1 1l7 11-7 11" /></svg>
            </button>
            <div class="controls">
              <div class="box">
                <button class="bare square blue" aria-label="Locate"><svg class="i32"><use href="#diamond" /></svg></button>
              </div>
              <div class="box column">
                <button class="bare square sign" aria-label="Zoom in"><svg viewBox="0 0 20 20" width="20" height="20"><path d="M0 10h20M10 0v20" /></svg></button>
                <button class="bare square sign" aria-label="Zoom out"><svg viewBox="0 0 20 20" width="20" height="20"><path d="M0 10h20" /></svg></button>
              </div>
              <div class="box tray">
                <button class="bare" aria-label="Warnings"><svg class="i34"><use href="#warning" /></svg></button>
                <button class="bare" aria-label="Routes on map"><svg class="i34"><use href="#mapfold" /></svg></button>
                <button class="bare" aria-label="Delete"><svg class="i34"><use href="#trash" /></svg></button>
              </div>
            </div>
          </section>
        </div>
      </main>

      <aside class="rail">
        <button v-for="r in rail" :key="r.icon" :aria-label="r.label" :class="['rail-tab', r.icon, { active: r.active }]">
          <svg class="i34"><use :href="'#' + r.icon" /></svg>
        </button>
      </aside>
    </div>
  </div>
</template>

<style>
body {
  margin: 0;
}
</style>

<style scoped>
* {
  box-sizing: border-box;
}
.app {
  display: flex;
  flex-direction: column;
  height: 100vh;
  overflow: hidden;
  background: #f4f4f4;
  color: #222;
  font-family: "Open Sans", "Noto Sans", sans-serif;
  font-size: 22px;
}
.sprite {
  position: absolute;
  width: 0;
  height: 0;
}
svg {
  display: block;
  flex: none;
  fill: none;
  stroke: currentColor;
  stroke-width: 1.6;
}
.i24 { width: 24px; height: 24px; stroke-width: 1; }
.i28 { width: 28px; height: 28px; }
.i32 { width: 32px; height: 32px; stroke-width: 2; }
.i34 { width: 34px; height: 34px; }
.i34.wide { width: 38px; }
.i50 { width: 50px; height: 50px; stroke-width: 2; }
.dot {
  fill: currentColor;
}
.letter {
  font: bold 27px "Liberation Sans", sans-serif;
}
.bare {
  display: flex;
  align-items: center;
  justify-content: center;
  padding: 0;
  border: 0;
  background: none;
  color: inherit;
  font: inherit;
  cursor: pointer;
}
h1, h2, dl, dd, ul {
  margin: 0;
  padding: 0;
}
.banner {
  display: flex;
  align-items: center;
  justify-content: center;
  flex: none;
  gap: 32px;
  height: 33px;
  background: #ffd91f;
  color: #111;
  font-size: 25px;
  line-height: 32px;
}
.banner .bare {
  padding-bottom: 2px;
}
.x-small {
  width: 18px;
  height: 18px;
  color: #7d6b10;
}
.header {
  position: relative;
  z-index: 3;
  display: flex;
  align-items: center;
  flex: none;
  height: 98px;
  padding-right: 24px;
  background: #0054a9;
  color: #fff;
  box-shadow: 0 3px 12px rgba(0, 0, 0, 0.35);
}
.brand {
  width: 358px;
  padding-left: 14px;
}
.logo {
  width: 54px;
  height: 62px;
  stroke: none;
}
h1 {
  font-size: 24px;
  font-weight: 500;
}
.account {
  margin-left: auto;
}
.body {
  display: flex;
  flex: 1;
  min-height: 0;
}
.sidebar {
  position: relative;
  z-index: 2;
  display: flex;
  flex-direction: column;
  flex: none;
  gap: 8px;
  width: 326px;
  padding-top: 25px;
  background: #d6d6d6;
  box-shadow: 2px 0 10px rgba(0, 0, 0, 0.5);
}
.collapse {
  align-self: center;
  width: 32px;
  height: 31px;
}
.collapse svg {
  margin-right: 10px;
  stroke-width: 1.4;
}
.menu-item {
  display: flex;
  align-items: center;
  gap: 15px;
  height: 49px;
  padding-left: 27px;
  color: #111;
  font-size: 23px;
  line-height: 30px;
  text-decoration: none;
}
.menu-item.active {
  padding-left: 10px;
  border-left: 17px solid #0054a9;
  background: #bfbfbf;
}
.menu-item svg {
  stroke: #222;
}
.main {
  display: flex;
  flex-direction: column;
  flex: 1;
  min-width: 0;
}
.topbar {
  display: flex;
  align-items: center;
  flex: none;
  gap: 14px;
  height: 73px;
  padding: 7px 24px 0 31px;
}
.picker {
  position: relative;
  flex: none;
  width: 488px;
}
.picker select {
  width: 100%;
  height: 52px;
  padding: 0 20px;
  border: 0;
  border-radius: 26px;
  appearance: none;
  background: #e0e0e0;
  color: #222;
  font: inherit;
}
.caret {
  position: absolute;
  top: 22px;
  right: 32px;
  width: 16px;
  height: 9px;
  fill: #222;
  stroke: none;
  pointer-events: none;
}
.filter {
  display: flex;
  align-items: center;
  gap: 8px;
  height: 52px;
  padding: 0 20px 0 22px;
  border: 0;
  border-radius: 26px;
  background: #e0e0e0;
  color: #222;
  font: inherit;
}
.filter span {
  padding-top: 2px;
}
.selected-count {
  display: flex;
  align-items: center;
  gap: 14px;
  margin-left: auto;
  font: 26px/32px Roboto, sans-serif;
}
.selected-count span {
  padding-top: 4px;
}
.selected-count input {
  position: relative;
  width: 26px;
  height: 26px;
  margin: 0;
  appearance: none;
  background: #808080;
}
.selected-count input:checked::before {
  content: "";
  position: absolute;
  top: 3px;
  left: 9px;
  width: 8px;
  height: 15px;
  border: solid #fff;
  border-width: 0 2px 2px 0;
  transform: rotate(42deg);
}
.workspace {
  display: grid;
  flex: 1;
  grid-template-columns: 505fr 533fr 322fr 736fr;
  min-height: 0;
  padding-left: 30px;
  overflow: hidden;
}
.routes {
  min-width: 0;
  margin: 5px 17px 0 0;
}
.toolbar {
  display: flex;
  align-items: center;
  gap: 13px;
  height: 52px;
  padding: 0 11px;
  border: 1px solid #d4d4d4;
}
.toolbar .bare {
  height: 40px;
  padding-bottom: 6px;
}
.toolbar svg {
  stroke-width: 2;
}
.sep {
  width: 1px;
  height: 40px;
  margin: 0 -4px;
  background: #d0d0d0;
}
.list {
  margin: 8px 15px 0 0;
  list-style: none;
}
.route {
  height: 125px;
  padding: 11px 4px 0 12px;
  border-bottom: 1px solid #d2d2d2;
  color: #808080;
  font: 23px/30px Roboto, sans-serif;
}
.route.chosen {
  background: #d9f1ff;
}
.route-head {
  display: flex;
  align-items: center;
  gap: 4px;
  height: 43px;
  color: #222;
}
.route-head strong {
  color: #000;
  font-size: 26px;
}
.route-head .alert,
.flag.alert {
  color: #ff4500;
}
.flag {
  align-self: flex-start;
  margin: 0 16px 0 auto;
}
.route-line {
  display: flex;
  justify-content: space-between;
  padding-left: 3px;
}
.status {
  color: #159015;
}
.panel {
  margin-top: 5px;
  border: 1px solid #e4e4e4;
  background: #fff;
}
.detail {
  min-width: 0;
  margin-right: 9px;
  padding: 0 17px 0 16px;
  overflow: hidden;
}
.sequence {
  padding-left: 16px;
  border-right: 0;
}
.panel-head {
  display: flex;
  align-items: center;
  justify-content: space-between;
  height: 62px;
  padding-right: 19px;
}
.panel-head button {
  color: #555;
}
h2 {
  color: #0054a9;
  font-size: 30px;
  font-weight: 700;
  white-space: nowrap;
}
.summary {
  display: grid;
  grid-template-columns: 245px 1fr;
  padding: 19px 0 11px;
}
dt {
  height: 35px;
  color: #444;
  font-size: 20px;
  line-height: 35px;
}
dd {
  height: 35px;
  color: #222;
  font: bold 24px/35px "Liberation Sans", Arial, sans-serif;
}
dd em {
  color: #808080;
  font: italic 21px/35px "Open Sans", sans-serif;
}
.range {
  height: 27px;
  margin-top: 18px;
  line-height: 32px;
}
.hours {
  padding-left: 19px;
}
.block {
  padding: 18px 0 10px;
  border-top: 2px solid #e4e4e4;
}
.map {
  position: relative;
  z-index: 1;
  min-width: 0;
  box-shadow: -8px 10px 50px rgba(0, 0, 0, 0.4);
}
.canvas {
  position: absolute;
  width: 100%;
  height: 100%;
  stroke: none;
}
.green { fill: #d0e6d2; }
.lake { fill: #b0d0ff; }
.light,
.river,
.country,
.border,
.minor,
.major {
  fill: none;
  stroke-linejoin: round;
}
.light { stroke: #cfcdc8; stroke-width: 4; }
.river { stroke: #b0d0ff; stroke-width: 7; }
.country { stroke: #a6a6a6; stroke-width: 12; }
.border { stroke: #808080; stroke-width: 5; }
.minor { stroke: #fdb069; stroke-width: 6; }
.major { stroke: #fdab5b; stroke-width: 13; }
.markers circle {
  fill: #fff;
  stroke: #666;
  stroke-width: 2;
}
.town,
.district {
  fill: #7c3440;
  stroke: rgba(255, 255, 255, 0.85);
  stroke-width: 4;
  stroke-linejoin: round;
  paint-order: stroke;
  font: 17px "Liberation Sans", Arial, sans-serif;
}
.district {
  fill: #c76d76;
  font-size: 18px;
  font-weight: bold;
}
.shield rect {
  stroke-width: 2;
}
.shield text {
  fill: #fff;
  font: 16px "Liberation Sans", Arial, sans-serif;
  text-anchor: middle;
}
.red rect { fill: #dc5a5a; stroke: #b93c3c; }
.green rect { fill: #3c963c; stroke: #2b732b; }
.blue rect { fill: #0e8ae8; stroke: #0b6ab5; }
.white rect { fill: #fff; stroke: #333; }
.shield.white text { fill: #111; }
.trips path {
  fill: none;
}
.depot {
  fill: #fff;
  stroke: #444;
  stroke-width: 2;
}
.stop {
  fill: #c9007f;
  stroke: #fff;
  stroke-width: 1;
}
.stop-no {
  fill: #fff;
  font: bold 20px "Liberation Sans", Arial, sans-serif;
  text-anchor: middle;
}
.expand {
  position: absolute;
  top: 16px;
  left: 0;
  display: flex;
  align-items: center;
  justify-content: center;
  width: 38px;
  height: 38px;
  padding: 0;
  border: 1px solid #ddd;
  background: #fff;
  color: #222;
}
.controls {
  position: absolute;
  right: 17px;
  bottom: 4px;
  display: flex;
  flex-direction: column;
  align-items: flex-end;
  gap: 18px;
}
.box {
  display: flex;
  border: 3px solid rgba(0, 0, 0, 0.25);
  border-radius: 6px;
  background: #fff;
  background-clip: padding-box;
  color: #333;
}
.column {
  flex-direction: column;
}
.square {
  width: 48px;
  height: 49px;
}
.square.blue {
  color: #0b66c3;
}
.square.blue svg {
  stroke-width: 1.6;
}
.square + .square {
  border-top: 1px solid #ccc;
}
.sign {
  color: #000;
}
.sign svg {
  stroke-width: 3;
}
.tray {
  gap: 15px;
  height: 60px;
  padding: 0 8px 0 12px;
}
.rail {
  display: flex;
  flex-direction: column;
  flex: none;
  width: 48px;
  background: #c8c8c8;
}
.rail-tab {
  display: flex;
  justify-content: center;
  flex: none;
  height: 274px;
  padding: 110px 0 0;
  border: 0;
  background: none;
  color: #333;
}
.rail-tab.chart {
  height: 253px;
}
.rail-tab.pin {
  flex: 1;
  min-height: 0;
}
.rail-tab.active {
  background: #0054a9;
  color: #fff;
}
</style>
